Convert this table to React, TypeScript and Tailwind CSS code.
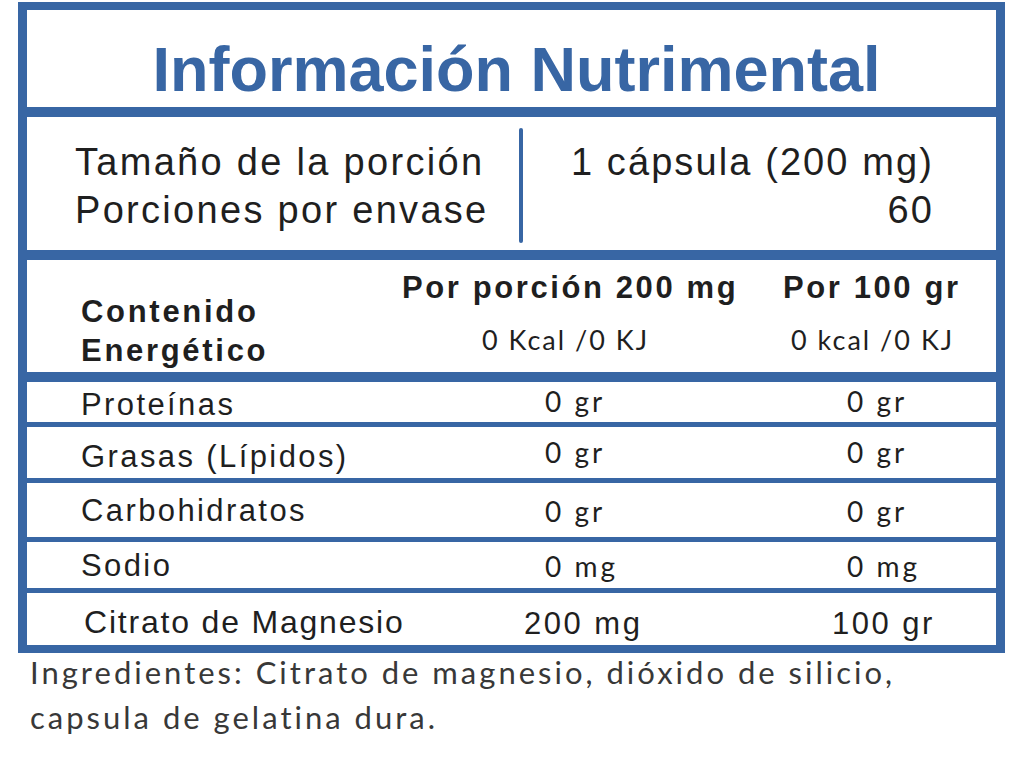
import React from 'react';

type Row = {
  label: string;
  per: string;
  per100: string;
  height: string;
  labelPad: string;
  valuePad: string;
};

const rows: Row[] = [
  { label: 'Proteínas', per: '0 gr', per100: '0 gr', height: 'h-[50px] border-t-[10px]', labelPad: 'pt-[7px]', valuePad: 'pt-[5px]' },
  { label: 'Grasas (Lípidos)', per: '0 gr', per100: '0 gr', height: 'h-[56px] border-t-[5px]', labelPad: 'pt-[14px]', valuePad: 'pt-[11px]' },
  { label: 'Carbohidratos', per: '0 gr', per100: '0 gr', height: 'h-[59px] border-t-[5px]', labelPad: 'pt-[12px]', valuePad: 'pt-[14px]' },
  { label: 'Sodio', per: '0 mg', per100: '0 mg', height: 'h-[51px] border-t-[5px]', labelPad: 'pt-[8px]', valuePad: 'pt-[10px]' },
];

const arial = "font-['Liberation_Sans',Arial,sans-serif]";
const lato = "font-['Lato',sans-serif]";

export default function App() {
  return (
    <div className="min-h-[782px] bg-white pl-[18px] pt-[2px] text-[#1f1f1f]">
      <div className="w-[987px] border-x-[9px] border-y-[8px] border-[#3866a4]">
        {/* title */}
        <div className="flex h-[97px] justify-center pl-[10px] pt-[28px]">
          <h1 className={`${arial} text-[63px] font-bold leading-none text-[#3866a4]`}>
            Información Nutrimental
          </h1>
        </div>

        {/* serving */}
        <div className={`${arial} flex h-[143px] border-t-[10px] border-[#3866a4] text-[38px] leading-[48px] tracking-[2.3px]`}>
          <div className="w-[492px] pl-[48px] pt-[21px]">
            <div>Tamaño de la porción</div>
            <div>Porciones por envase</div>
          </div>
          <div className="mt-[11px] mb-[7px] w-[4px] rounded-full bg-[#3866a4]" />
          <div className="flex-1 pr-[62px] pt-[21px] text-right tracking-[2.1px]">
            <div>1 cápsula (200 mg)</div>
            <div>60</div>
          </div>
        </div>

        {/* header */}
        <div className="grid h-[122px] grid-cols-[375px_381px_213px] border-t-[10px] border-[#3866a4]">
          <div className={`${arial} pl-[54px] pt-[32px] text-[31px] font-bold leading-[39px] tracking-[2.7px]`}>
            Contenido
            <br />
            Energético
          </div>
          <div className="pt-[12px]">
            <div className={`${arial} text-[31px] font-bold leading-none tracking-[2.6px]`}>Por porción 200 mg</div>
            <div className={`${lato} mt-[23px] pl-[80px] text-[27px] leading-none tracking-[2px]`}>0 Kcal /0 KJ</div>
          </div>
          <div className="pt-[12px]">
            <div className={`${arial} text-[31px] font-bold leading-none tracking-[2.6px]`}>Por 100 gr</div>
            <div className={`${lato} mt-[23px] pl-[8px] text-[27px] leading-none tracking-[2px]`}>0 kcal /0 KJ</div>
          </div>
        </div>

        {/* nutrient rows */}
        {rows.map((r) => (
          <div key={r.label} className={`grid grid-cols-[375px_381px_213px] border-[#3866a4] ${r.height}`}>
            <div className={`${arial} whitespace-nowrap pl-[54px] text-[31px] leading-none tracking-[2.4px] ${r.labelPad}`}>{r.label}</div>
            <div className={`${lato} pl-[143px] text-[28px] leading-none tracking-[3px] ${r.valuePad}`}>{r.per}</div>
            <div className={`${lato} pl-[64px] text-[28px] leading-none tracking-[3px] ${r.valuePad}`}>{r.per100}</div>
          </div>
        ))}

        <div className={`${arial} grid h-[57px] grid-cols-[375px_381px_213px] border-t-[5px] border-[#3866a4]`}>
          <div className="whitespace-nowrap pl-[57px] pt-[13px] text-[32px] leading-none tracking-[1.8px]">Citrato de Magnesio</div>
          <div className="pl-[122px] pt-[15px] text-[31px] leading-none tracking-[2.5px]">200 mg</div>
          <div className="pl-[49px] pt-[15px] text-[31px] leading-none tracking-[2.5px]">100 gr</div>
        </div>
      </div>

      <p className={`${lato} -mt-[3px] pl-[12px] text-[31px] leading-[45px] tracking-[3px] text-[#383838]`}>
        Ingredientes: Citrato de magnesio, dióxido de silicio,
        <br />
        capsula de gelatina dura.
      </p>
    </div>
  );
}
